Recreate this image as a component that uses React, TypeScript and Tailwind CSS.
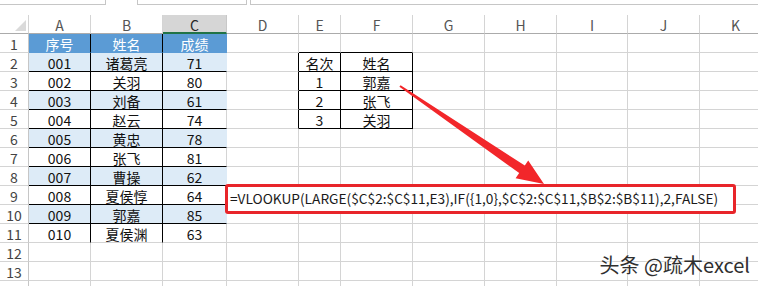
import React from 'react';

const COLS = ['A', 'B', 'C', 'D', 'E', 'F', 'G', 'H', 'I', 'J', 'K'];
const ROWS = [1, 2, 3, 4, 5, 6, 7, 8, 9, 10, 11, 12, 13, 14];

const names = ['诸葛亮', '关羽', '刘备', '赵云', '黄忠', '张飞', '曹操', '夏侯惇', '郭嘉', '夏侯渊'];
const scores = [71, 80, 61, 74, 78, 81, 62, 64, 85, 63];

const cells: Record<string, string> = {
  A1: '序号',
  B1: '姓名',
  C1: '成绩',
  E2: '名次',
  F2: '姓名',
  E3: '1',
  F3: '郭嘉',
  E4: '2',
  F4: '张飞',
  E5: '3',
  F5: '关羽',
};
names.forEach((n, i) => {
  cells[`A${i + 2}`] = String(i + 1).padStart(3, '0');
  cells[`B${i + 2}`] = n;
  cells[`C${i + 2}`] = String(scores[i]);
});

function cellClass(c: string, r: number) {
  let bg = 'bg-white';
  let text = 'text-[#111]';
  let br = 'border-r-[#d4d4d4]';
  let bb = 'border-b-[#d4d4d4]';

  const inMain = (c === 'A' || c === 'B' || c === 'C') && r <= 11;
  if (inMain) {
    if (r === 1) {
      bg = 'bg-[#5b9bd5]';
      text = 'text-white';
    } else if (r % 2 === 0) {
      bg = 'bg-[#ddebf7]';
    }
    if (c !== 'C') br = 'border-r-black';
    else if (r === 1) br = 'border-r-[#5b9bd5]';
    else if (r % 2 === 0) br = 'border-r-[#ddebf7]';
    if (r === 1) bb = 'border-b-[#5b9bd5]';
    else if (r <= 10) bb = 'border-b-black';
  }

  // rank table E2:F5
  if ((c === 'E' || c === 'F') && r >= 2 && r <= 5) {
    br = 'border-r-black';
    bb = 'border-b-black';
  }
  if (c === 'D' && r >= 2 && r <= 5) br = 'border-r-black';
  if ((c === 'E' || c === 'F') && r === 1) bb = 'border-b-black';

  return `${bg} ${text} ${br} ${bb}`;
}

function TopStrip() {
  return (
    <div className="h-[15px] relative flex bg-white">
      <div className="w-[106px] h-[5px] border-r border-b border-[#c6c6c6] bg-white" />
      <div className="w-[31px]" />
      <div className="w-[110px] h-[5px] border-l border-r border-b border-[#c6c6c6] bg-white" />
      <div className="w-[3px]" />
      <div className="flex-1 h-[5px] border-l border-b border-[#c6c6c6] bg-white" />
    </div>
  );
}

function Arrow() {
  return (
    <svg className="absolute left-0 top-0 pointer-events-none" width="758" height="286" viewBox="0 0 758 286">
      <polygon
        points="400.6,85.2 524.8,165.6 528.2,160.4 544,184 515.6,178.2 519.2,173 399.4,86.8"
        fill="#f2262a"
      />
    </svg>
  );
}

export default function App() {
  return (
    <div className="w-[758px] h-[286px] overflow-hidden bg-white relative font-['Noto_Sans_CJK_SC',sans-serif]">
      <TopStrip />
      <div className="grid grid-cols-[29px_62px_72px_64px_72px_42px_72px_72px_72px_71px_72px_72px] auto-rows-[19px]">
        {/* corner */}
        <div className="relative bg-white border-r border-b border-r-[#d4d4d4] border-b-[#ababab]">
          <svg className="absolute left-[15px] top-[5px]" width="12" height="12" viewBox="0 0 12 12">
            <polygon points="11,0 11,11 0,11" fill="#dadada" />
          </svg>
        </div>
        {COLS.map((c) =>
          c === 'C' ? (
            <div
              key={c}
              className="flex items-center justify-center bg-[#d6d6d6] border-r border-b-2 border-r-[#c8c8c8] border-b-[#217346] text-[14px] leading-none text-[#262626] pt-[2px]"
            >
              {c}
            </div>
          ) : (
            <div
              key={c}
              className="flex items-center justify-center bg-white border-r border-b border-r-[#d4d4d4] border-b-[#ababab] text-[14px] leading-none text-[#555] pt-px"
            >
              {c}
            </div>
          )
        )}

        {ROWS.map((r) => (
          <React.Fragment key={r}>
            <div className="flex items-center justify-center bg-white border-r border-b border-r-[#c6c6c6] border-b-[#d4d4d4] text-[14px] leading-none text-[#444] pt-px">
              {r < 14 ? r : ''}
            </div>
            {COLS.map((c) => (
              <div
                key={c}
                className={`flex items-center justify-center border-r border-b text-[14px] leading-none pt-[2px] ${cellClass(c, r)}`}
              >
                {cells[`${c}${r}`] ?? ''}
              </div>
            ))}
          </React.Fragment>
        ))}
      </div>

      {/* annotation: formula box */}
      <div className="absolute left-[225px] top-[184px] w-[511px] h-[30px] border-[3px] border-[#e8252a] rounded-[3px] bg-white flex items-center pl-[2px] text-[13.7px] leading-none text-[#1a1a1a] whitespace-nowrap">
        =VLOOKUP(LARGE($C$2:$C$11,E3),IF({'{'}1,0{'}'},$C$2:$C$11,$B$2:$B$11),2,FALSE)
      </div>

      <Arrow />

      <div className="absolute right-[8px] top-[255px] text-[20px] leading-none text-[#2f2f2f] whitespace-nowrap [text-shadow:0_0_2px_#fff,0_0_2px_#fff]">
        头条 @疏木excel
      </div>
    </div>
  );
}
